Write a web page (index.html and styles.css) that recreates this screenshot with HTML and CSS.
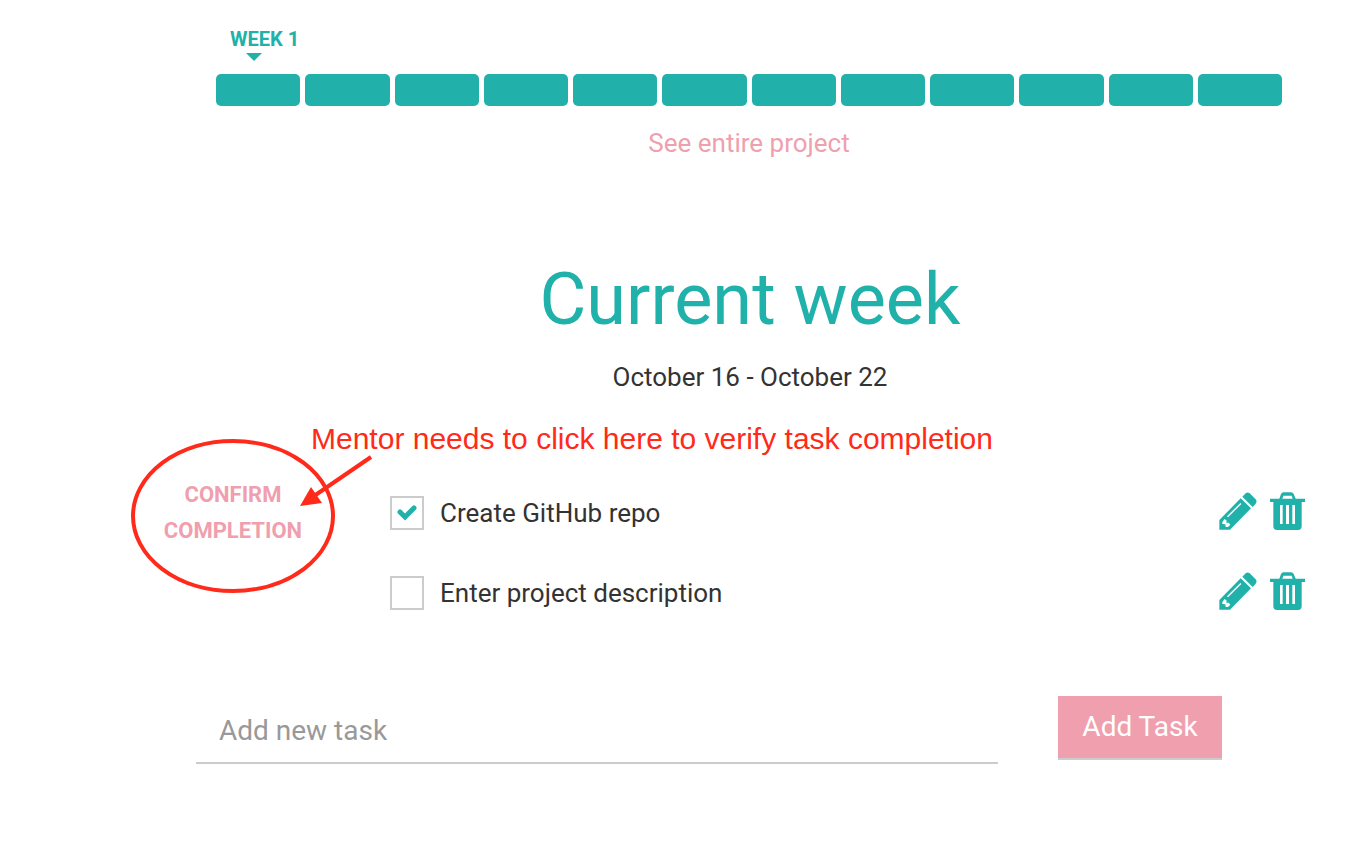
FILE: index.html
```html
<!DOCTYPE html>
<html lang="en">
<head>
<meta charset="utf-8">
<title>Current week</title>
<link rel="stylesheet" href="styles.css">
</head>
<body>
<svg class="sprite" aria-hidden="true">
  <symbol id="pencil" viewBox="0 0 114 114">
    <path d="M1 84 65 19 96 49 33 113H1Z M70 14 80 4Q86 -1 92 4L110 22Q115 28 110 35L101 45Z"/>
    <path class="cut" d="M24 73 64 33 67 36 27 76Z M10 90 17 81 23 86 22 92 29 92 34 98 27 105 20 105 19 97 10 96Z"/>
  </symbol>
  <symbol id="trash" viewBox="0 0 105 114">
    <path fill-rule="evenodd" d="M0 20H28L33 6Q35 1 41 1H63Q69 1 71 6L77 20H105V30H95V102Q95 114 84 114H21Q10 114 10 102V30H0Z M37 20H68L65 11H40Z M30 39V96H38V39Z M48 39V96H57V39Z M67 39V96H75V39Z"/>
  </symbol>
</svg>
<main class="page">
  <section class="timeline">
    <div class="marker"><span class="marker-label">WEEK 1</span><span class="marker-caret"></span></div>
    <div class="weeks"><span class="week"></span><span class="week"></span><span class="week"></span><span class="week"></span><span class="week"></span><span class="week"></span><span class="week"></span><span class="week"></span><span class="week"></span><span class="week"></span><span class="week"></span><span class="week"></span></div>
    <a class="project-link" href="#">See entire project</a>
  </section>
  <header class="heading">
    <h1 class="title">Current week</h1>
    <p class="dates">October 16 - October 22</p>
  </header>
  <section class="tasks">
    <div class="task">
      <button class="confirm" type="button">Confirm completion</button>
      <input class="check" type="checkbox" id="task1" checked>
      <label class="task-name" for="task1">Create GitHub repo</label>
      <button class="icon-button" type="button" aria-label="Edit"><svg class="icon pencil"><use href="#pencil"/></svg></button>
      <button class="icon-button" type="button" aria-label="Delete"><svg class="icon trash"><use href="#trash"/></svg></button>
    </div>
    <div class="task">
      <input class="check" type="checkbox" id="task2">
      <label class="task-name" for="task2">Enter project description</label>
      <button class="icon-button" type="button" aria-label="Edit"><svg class="icon pencil"><use href="#pencil"/></svg></button>
      <button class="icon-button" type="button" aria-label="Delete"><svg class="icon trash"><use href="#trash"/></svg></button>
    </div>
    <p class="note">Mentor needs to click here to verify task completion</p>
    <svg class="note-mark" viewBox="0 0 250 160" aria-hidden="true">
      <ellipse cx="103" cy="81" rx="100" ry="75"/>
      <path class="shaft" d="M241 22 184 61"/>
      <path class="head" d="M170 71 181 52 192 68Z"/>
    </svg>
  </section>
  <form class="add-form">
    <input class="add-input" type="text" placeholder="Add new task" aria-label="Add new task">
    <button class="add-button" type="button">Add Task</button>
  </form>
</main>
</body>
</html>
```
FILE: styles.css
```css
* {
  box-sizing: border-box;
}

body {
  margin: 0;
  background: #fff;
  color: #333;
  font: 26px/36px Roboto, sans-serif;
}

button,
input {
  font: inherit;
  border: 0;
  margin: 0;
}

button {
  padding: 0;
  background: none;
  cursor: pointer;
}

.sprite {
  display: none;
}

.page {
  margin-left: 136px;
}

.timeline {
  display: flex;
  flex-direction: column;
  padding: 26px 82px 0 80px;
}

.marker {
  display: flex;
  flex-direction: column;
  padding-left: 14px;
  color: #20b2aa;
  font-size: 20px;
  font-weight: 700;
  line-height: 26px;
}

.marker-caret {
  width: 16px;
  height: 8px;
  margin: 1px 0 13px 16px;
  background: currentColor;
  clip-path: polygon(0 0, 100% 0, 50% 100%);
}

.weeks {
  display: grid;
  grid-template-columns: repeat(12, 1fr);
  gap: 5px;
}

.week {
  height: 32px;
  border-radius: 5px;
  background: #22b0ab;
}

.project-link {
  align-self: center;
  margin-top: 19px;
  color: #ef9fae;
  text-decoration: none;
}

.heading {
  padding-top: 95px;
  text-align: center;
}

.title {
  margin: 0;
  color: #20b2aa;
  font-size: 72px;
  font-weight: 400;
  line-height: 88px;
}

.dates {
  margin: 15px 0 0;
}

.tasks {
  position: relative;
  padding: 78px 59px 0 0;
}

.task {
  display: grid;
  grid-template-columns: 254px 50px 1fr 51px 35px;
  align-items: center;
  min-height: 80px;
}

.confirm {
  width: 194px;
  padding: 0 20px;
  color: #ef9fae;
  font-size: 22px;
  font-weight: 700;
  text-transform: uppercase;
}

.check {
  grid-column: 2;
  width: 34px;
  height: 34px;
  appearance: none;
  border: 2px solid #ccc;
  background: #fff;
}

.check:checked {
  background: #fff url("data:image/svg+xml,%3Csvg xmlns='http://www.w3.org/2000/svg' viewBox='0 0 30 30'%3E%3Cpath d='M8 14l5 5L22 10' fill='none' stroke='%2320b2aa' stroke-width='5' stroke-linecap='round'/%3E%3C/svg%3E") center / 30px;
}

.icon-button {
  padding-bottom: 5px;
}

.icon {
  display: block;
  height: 38px;
  fill: #20b2aa;
}

.pencil {
  width: 38px;
}

.trash {
  width: 35px;
}

.cut {
  fill: #fff;
}

.note {
  position: absolute;
  top: 26px;
  left: 175px;
  margin: 0;
  color: #ff2a1a;
  font: 30px/36px "Liberation Sans", Arial, sans-serif;
  white-space: nowrap;
}

.note-mark {
  position: absolute;
  top: 40px;
  left: -6px;
  width: 250px;
  height: 160px;
  pointer-events: none;
}

.note-mark ellipse,
.shaft {
  fill: none;
  stroke: #ff2a1a;
  stroke-width: 4px;
}

.head {
  fill: #ff2a1a;
}

.add-form {
  display: flex;
  align-items: flex-start;
  gap: 60px;
  padding: 63px 142px 40px 60px;
  font-size: 28px;
}

.add-input {
  flex: 1;
  min-width: 0;
  height: 68px;
  padding: 2px 23px 0;
  border-bottom: 2px solid #ccc;
  background: none;
}

.add-input::placeholder {
  color: #999;
  opacity: 1;
}

.add-button {
  width: 164px;
  height: 64px;
  border-bottom: 2px solid #ccc;
  background: #ef9fae;
  color: #fff;
}
```
